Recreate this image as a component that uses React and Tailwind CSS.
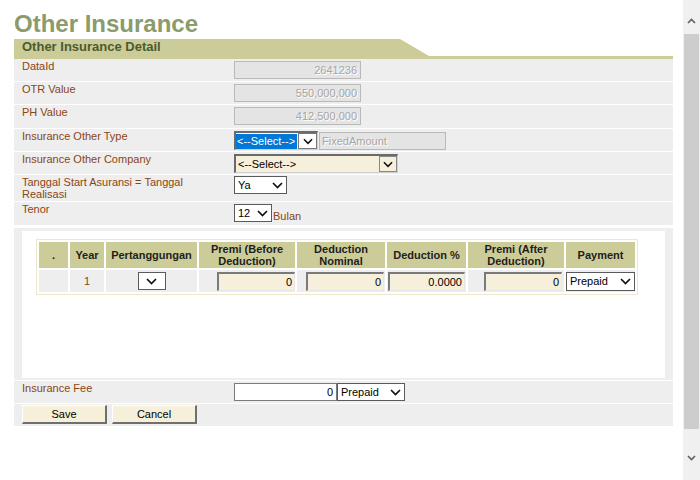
import React from 'react'

const LABEL = 'text-[11px] leading-[13px] text-[#8b4513]'

function Chevron({ size = 11 }) {
  return (
    <svg width={size} height="7" viewBox="0 0 11 7">
      <path d="M1 1l4.5 4.5L10 1" fill="none" stroke="#111" strokeWidth="1.7" />
    </svg>
  )
}

function Row({ label, h = 'h-[23px]', children }) {
  return (
    <div className={`flex ${h} bg-[#eeeeee] border-b border-white`}>
      <div className={`w-[220px] shrink-0 pl-[8px] pt-[1px] ${LABEL}`}>{label}</div>
      <div className="flex items-start pt-[2px]">{children}</div>
    </div>
  )
}

function ReadOnly({ value }) {
  return (
    <div className="w-[127px] h-[18px] border border-[#b9b9b9] bg-[#e4e4e4] text-right pr-[3px] text-[11px] leading-[16px] text-[#a6a6a6] [text-shadow:1px_1px_0_#fff]">
      {value}
    </div>
  )
}

function PlainSelect({ value, w }) {
  return (
    <div className={`${w} h-[18px] border border-[#5a5a5a] bg-white flex items-center justify-between pl-[3px] pr-[3px] text-[11px] text-black`}>
      <span>{value}</span>
      <Chevron />
    </div>
  )
}

function CellInput({ value, w = 'w-[78px]' }) {
  return (
    <div className={`${w} h-[19px] bg-[#f6efdb] border-t-2 border-l-2 border-t-[#7a7a7a] border-l-[#7a7a7a] border-b border-r border-b-[#e6e6e6] border-r-[#e6e6e6] text-right pr-[2px] text-[11px] leading-[16px] text-black`}>
      {value}
    </div>
  )
}

function Header({ children, w }) {
  return (
    <th className={`${w} p-0 bg-[#cccc99] text-center text-[11px] leading-[12px] font-bold text-[#1e1e1e]`}>{children}</th>
  )
}

function Button({ children }) {
  return (
    <button className="w-[85px] h-[19px] bg-[#f6efda] border-t border-l border-t-white border-l-white border-b-2 border-r-2 border-b-[#6f6f6f] border-r-[#6f6f6f] text-[11px] leading-[14px] text-black">
      {children}
    </button>
  )
}

export default function App() {
  return (
    <div className="flex w-[700px] h-[480px] bg-white overflow-hidden" style={{ fontFamily: '"Liberation Sans", Arial, sans-serif' }}>
      <div className="w-[683px] shrink-0 pl-[14px] pr-[10px]">
        <div className="h-[39px] pt-[10px] text-[24px] leading-[28px] font-bold text-[#8b9b6b]">Other Insurance</div>

        <div className="flex h-[20px]">
          <div className="w-[386px] shrink-0 bg-[#cccc99] pl-[8px] text-[13px] leading-[16px] font-bold text-[#4b5b2f]">
            Other Insurance Detail
          </div>
          <svg width="29" height="20" viewBox="0 0 29 20" className="shrink-0">
            <polygon points="0,0 29,17 29,20 0,20" fill="#cccc99" />
          </svg>
          <div className="flex-1 self-end h-[3px] bg-[#cccc99]" />
        </div>

        <Row label="DataId">
          <ReadOnly value="2641236" />
        </Row>
        <Row label="OTR Value">
          <ReadOnly value="550,000,000" />
        </Row>
        <Row label="PH Value" h="h-[24px]">
          <ReadOnly value="412,500,000" />
        </Row>
        <Row label="Insurance Other Type">
          <div className="flex w-[84px] h-[19px] border-t-2 border-l-2 border-t-[#6a6a6a] border-l-[#6a6a6a] border-b border-r border-b-[#d0d0d0] border-r-[#d0d0d0] bg-white">
            <span className="w-[61px] h-[15px] mt-[1px] bg-[#0078d7] text-white text-[11px] leading-[15px] pl-[1px]">&lt;--Select--&gt;</span>
            <span className="w-[19px] h-[16px] ml-[1px] border border-[#777] flex items-center justify-center bg-white">
              <Chevron size={10} />
            </span>
          </div>
          <div className="w-[127px] h-[18px] ml-[1px] mt-[1px] border border-[#b9b9b9] bg-[#e4e4e4] pl-[2px] text-[11px] leading-[16px] text-[#a6a6a6] [text-shadow:1px_1px_0_#fff]">
            FixedAmount
          </div>
        </Row>
        <Row label="Insurance Other Company">
          <div className="flex justify-between w-[164px] h-[19px] border-t-2 border-l-2 border-t-[#6a6a6a] border-l-[#6a6a6a] border-b border-r border-b-[#d0d0d0] border-r-[#d0d0d0] bg-[#f6efdb]">
            <span className="text-[11px] leading-[16px] pl-[2px] text-black">&lt;--Select--&gt;</span>
            <span className="w-[18px] h-[16px] border border-[#888] flex items-center justify-center bg-[#f6efdb]">
              <Chevron size={10} />
            </span>
          </div>
        </Row>
        <Row label={<span className="block w-[185px] leading-[12px]">Tanggal Start Asuransi = Tanggal Realisasi</span>} h="h-[27px]">
          <div className="-mt-[1px]">
            <PlainSelect value="Ya" w="w-[53px]" />
          </div>
        </Row>
        <div className="flex h-[23px] bg-[#eeeeee] border-b-[3px] border-white box-content">
          <div className={`w-[220px] shrink-0 pl-[8px] pt-[1px] ${LABEL}`}>Tenor</div>
          <div className="flex items-start pt-[2px]">
            <PlainSelect value="12" w="w-[38px]" />
            <span className={`${LABEL} pt-[6px] pl-[1px]`}>Bulan</span>
          </div>
        </div>

        <div className="bg-[#eeeeee] pt-[3px] pb-[2px] px-[8px] border-b border-white">
          <div className="h-[147px] bg-white pt-[8px] pl-[14px]">
            <table className="table-fixed border-separate border-spacing-[2px] border border-[#efe6cc] w-[602px]">
              <thead>
                <tr className="h-[26px]">
                  <Header w="w-[29px]">.</Header>
                  <Header w="w-[34px]">Year</Header>
                  <Header w="w-[91px]">Pertanggungan</Header>
                  <Header w="w-[96px]">Premi (Before<br />Deduction)</Header>
                  <Header w="w-[88px]">Deduction<br />Nominal</Header>
                  <Header w="w-[79px]">Deduction %</Header>
                  <Header w="w-[96px]">Premi (After<br />Deduction)</Header>
                  <Header w="w-[69px]">Payment</Header>
                </tr>
              </thead>
              <tbody>
                <tr className="h-[22px]">
                  <td className="p-0 bg-[#eeeeee]" />
                  <td className="p-0 bg-[#eeeeee] text-center text-[11px] text-[#8b4513]">1</td>
                  <td className="p-0 bg-[#eeeeee]">
                    <div className="flex justify-center">
                      <div className="w-[28px] h-[18px] border border-[#5a5a5a] bg-white flex items-center justify-center">
                        <Chevron />
                      </div>
                    </div>
                  </td>
                  <td className="p-0 bg-[#eeeeee]">
                    <div className="flex justify-end"><CellInput value="0" /></div>
                  </td>
                  <td className="p-0 bg-[#eeeeee]">
                    <div className="flex justify-end pr-[1px]"><CellInput value="0" /></div>
                  </td>
                  <td className="p-0 bg-[#eeeeee]">
                    <div className="flex justify-center"><CellInput value="0.0000" w="w-[77px]" /></div>
                  </td>
                  <td className="p-0 bg-[#eeeeee]">
                    <div className="flex justify-end pr-[2px]"><CellInput value="0" /></div>
                  </td>
                  <td className="p-0 bg-[#eeeeee]">
                    <PlainSelect value="Prepaid" w="w-[69px] h-[19px]" />
                  </td>
                </tr>
              </tbody>
            </table>
          </div>
        </div>

        <Row label="Insurance Fee">
          <div className="w-[103px] h-[18px] border border-[#7a7a7a] bg-white text-right pr-[3px] text-[11px] leading-[16px] text-black">0</div>
          <PlainSelect value="Prepaid" w="w-[68px]" />
        </Row>
        <div className="flex gap-[5px] h-[22px] bg-[#eeeeee] pl-[8px] pt-[1px]">
          <Button>Save</Button>
          <Button>Cancel</Button>
        </div>
      </div>

      <div className="w-[17px] h-[480px] bg-[#f0f0f0] flex flex-col items-center">
        <div className="h-[34px] flex items-center justify-center pt-[8px]">
          <svg width="9" height="6" viewBox="0 0 9 6">
            <path d="M1 5l3.5-3.5L8 5" fill="none" stroke="#606060" strokeWidth="1.6" />
          </svg>
        </div>
        <div className="w-[15px] h-[395px] bg-[#cdcdcd]" />
        <div className="flex-1 flex items-center justify-center pt-[6px]">
          <svg width="9" height="6" viewBox="0 0 9 6">
            <path d="M1 1l3.5 3.5L8 1" fill="none" stroke="#606060" strokeWidth="1.6" />
          </svg>
        </div>
      </div>
    </div>
  )
}
